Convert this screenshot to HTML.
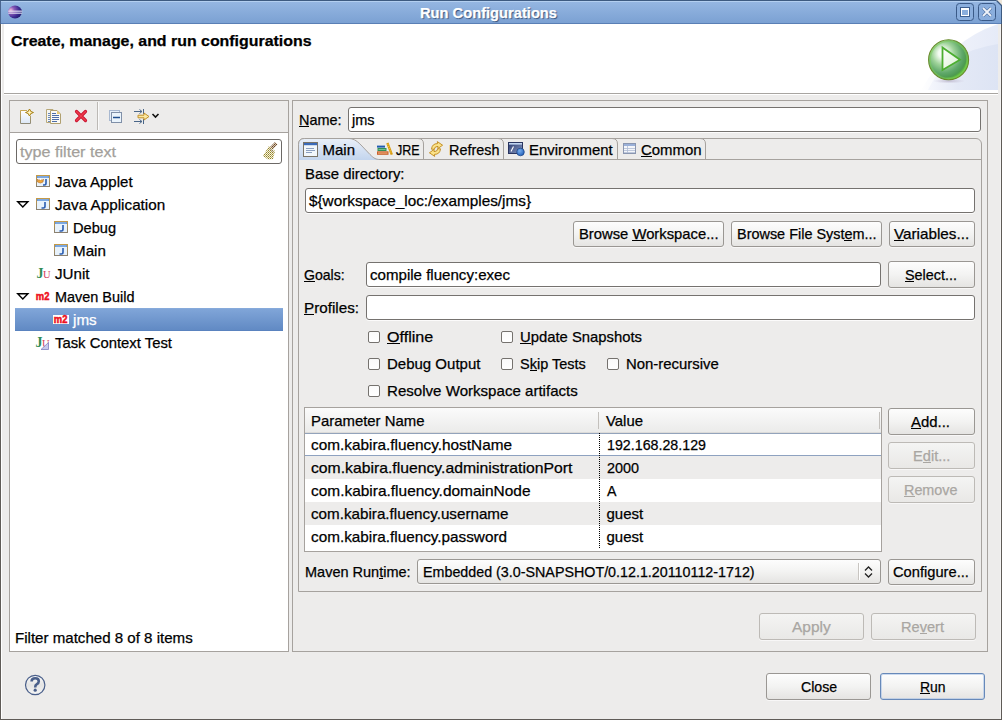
<!DOCTYPE html>
<html><head><meta charset="utf-8"><style>
html,body{margin:0;padding:0;}
body{width:1002px;height:720px;overflow:hidden;background:#edeceb;font-family:"Liberation Sans",sans-serif;}
#win{position:relative;width:1002px;height:720px;overflow:hidden;background:#edeceb;}
.a{position:absolute;box-sizing:border-box;}
.t{position:absolute;white-space:pre;font-family:"Liberation Sans",sans-serif;-webkit-text-stroke:0.25px currentColor;}
.tb{position:absolute;box-sizing:border-box;background:#fff;border:1px solid #75726f;border-radius:3px;box-shadow:0 1px 0 rgba(255,255,255,.8);}
.btn{position:absolute;box-sizing:border-box;border:1px solid #9a9793;border-radius:3px;background:linear-gradient(#fdfdfd,#f3f3f2 50%,#e5e4e2);box-shadow:0 1px 0 rgba(255,255,255,.6);}
.btn.dis{border-color:#bdbab6;background:linear-gradient(#f4f4f3,#e9e8e6);}
.btn.def{border-color:#6789b9;box-shadow:inset 0 0 0 1px rgba(170,195,230,.6);}
.cb{position:absolute;box-sizing:border-box;width:12px;height:12px;border:1px solid #75726e;border-radius:2px;background:linear-gradient(#fafafa,#fff);}
.frame{position:absolute;box-sizing:border-box;border:1px solid #a6a29e;}
svg{position:absolute;overflow:visible;}

</style></head><body>
<div id="win">
<div class="a" style="left:0;top:0;width:1002px;height:24px;background:linear-gradient(#97b8e3,#7aa0d2);"></div>
<div class="a" style="left:0;top:0;width:1002px;height:1px;background:#3d5a80"></div>
<div class="a" style="left:0;top:1px;width:1002px;height:1px;background:#b3cff0"></div>
<div class="a" style="left:0;top:23px;width:1002px;height:1px;background:#5a7fb5"></div>
<div class="a" style="left:1px;top:24px;width:1000px;height:70px;background:#fff"></div>
<svg style="left:0;top:0" width="1002" height="100" viewBox="0 0 1002 100">
<defs><linearGradient id="dg" x1="920" y1="0" x2="998" y2="0" gradientUnits="userSpaceOnUse"><stop offset="0" stop-color="#ffffff"/><stop offset=".5" stop-color="#eef1fa"/><stop offset="1" stop-color="#e6ebf8"/></linearGradient>
<linearGradient id="dg2" x1="930" y1="0" x2="998" y2="0" gradientUnits="userSpaceOnUse"><stop offset="0" stop-color="#f4f6fc"/><stop offset=".4" stop-color="#e4e9f6"/><stop offset="1" stop-color="#dde4f4"/></linearGradient></defs>
<path d="M921 90 Q950 40 998 24 V90 Z" fill="url(#dg)"/>
<path d="M928 90 Q945 52 998 44 V90 Z" fill="url(#dg2)"/>
</svg>
<div class="a" style="left:4px;top:93px;width:994px;height:1px;background:#a8a5a1"></div>
<div class="a" style="left:4px;top:94px;width:994px;height:1px;background:#fff"></div>
<div class="a" style="left:2px;top:24px;width:2px;height:70px;background:#edeceb"></div>
<div class="a" style="left:998px;top:24px;width:2px;height:70px;background:#edeceb"></div>
<div class="a" style="left:0;top:24px;width:1px;height:696px;background:#5f5b57"></div>
<div class="a" style="left:1px;top:24px;width:1px;height:695px;background:#fff"></div>
<div class="a" style="left:1001px;top:24px;width:1px;height:696px;background:#5f5b57"></div>
<div class="a" style="left:1000px;top:24px;width:1px;height:695px;background:#f4f3f2"></div>
<div class="a" style="left:0;top:719px;width:1002px;height:1px;background:#5f5b57"></div>
<svg style="left:995px;top:0" width="7" height="7" viewBox="0 0 7 7"><path d="M1 0 H7 V6 Z" fill="#ede6da"/><path d="M1.5 0.5 L6.5 5.5" stroke="#3d5a80" stroke-width="1.2"/></svg>
<div class="a" style="left:1001px;top:5px;width:1px;height:19px;background:#3d5a80"></div>
<div class="a" style="left:0;top:1px;width:1px;height:23px;background:#4a6590"></div>
<div class="t" style="left:420px;top:4.30px;font-size:15px;line-height:17px;font-weight:bold;color:#fff;text-shadow:1px 1px 1px #34507a;transform:scaleX(0.9787);transform-origin:0 0;">Run Configurations</div>
<svg style="left:7px;top:5px" width="16" height="14" viewBox="0 0 16 14">
<defs><radialGradient id="eg" cx="20%" cy="35%" r="85%"><stop offset="0" stop-color="#f0b8d8"/><stop offset=".3" stop-color="#8a5ab8"/><stop offset=".7" stop-color="#3a2a90"/><stop offset="1" stop-color="#20186a"/></radialGradient></defs>
<ellipse cx="8" cy="7" rx="7" ry="6.4" fill="url(#eg)"/>
<rect x="1.2" y="5.6" width="14" height="1.1" fill="#e6e8f6"/><rect x="1.2" y="7.6" width="14" height="1.1" fill="#e6e8f6"/></svg>
<svg style="left:956px;top:3px" width="40" height="18" viewBox="0 0 40 18">
<rect x="0.5" y="0.5" width="17" height="17" rx="3" fill="#8aaedd" stroke="#3a5a88"/>
<rect x="4.5" y="4.5" width="9" height="9" fill="none" stroke="#3d5f90" stroke-width="1"/>
<rect x="5.5" y="5.5" width="7" height="7" fill="none" stroke="#fff" stroke-width="1"/>
<rect x="6" y="5" width="6" height="2" fill="#fff"/>
<rect x="22.5" y="0.5" width="17" height="17" rx="3" fill="#8aaedd" stroke="#3a5a88"/>
<path d="M27 5 L35 13 M35 5 L27 13" stroke="#3d5f90" stroke-width="3"/>
<path d="M27 5 L35 13 M35 5 L27 13" stroke="#eef3fa" stroke-width="2"/>
</svg>
<div class="t" style="left:11px;top:32.30px;font-size:15px;line-height:17px;font-weight:bold;color:#000;transform:scaleX(1.0604);transform-origin:0 0;">Create, manage, and run configurations</div>
<svg style="left:926px;top:37px" width="46" height="48" viewBox="0 0 46 48">
<defs>
<radialGradient id="rg" cx="38%" cy="38%" r="62%" fx="35%" fy="33%"><stop offset="0" stop-color="#ffffff"/><stop offset=".18" stop-color="#f2faf0"/><stop offset=".45" stop-color="#9fd39a"/><stop offset=".75" stop-color="#5fa86a"/><stop offset=".92" stop-color="#4d9a50"/><stop offset="1" stop-color="#62c03a"/></radialGradient>
<radialGradient id="sh" cx="50%" cy="50%" r="50%"><stop offset="0" stop-color="#b0a8c0" stop-opacity=".7"/><stop offset="1" stop-color="#c0b8d0" stop-opacity="0"/></radialGradient>
</defs>
<ellipse cx="23" cy="44" rx="16" ry="2.5" fill="url(#sh)"/>
<circle cx="22.6" cy="22.8" r="20" fill="url(#rg)" stroke="#6a8a2a" stroke-width="1.1"/>
<circle cx="22.6" cy="22.8" r="18.6" fill="none" stroke="#7ccc5a" stroke-width="1.6" opacity=".55"/>
<defs><linearGradient id="trg" x1="0" y1="0" x2="1" y2="1"><stop offset="0" stop-color="#ffffff"/><stop offset="1" stop-color="#d8f0d0"/></linearGradient></defs><path d="M16.5 10.5 L34 22.7 L16.5 33 Z" fill="url(#trg)" stroke="#4cae30" stroke-width="1.8" stroke-linejoin="miter"/>
</svg>
<div class="frame" style="left:9px;top:100px;width:280px;height:552px;background:#fff"></div>
<div class="a" style="left:10px;top:101px;width:278px;height:31px;background:#edeceb"></div>
<div class="a" style="left:10px;top:132px;width:278px;height:1px;background:#a6a29e"></div>
<div class="a" style="left:97px;top:102px;width:1px;height:28px;background:#bcb9b5"></div>
<div class="a" style="left:98px;top:102px;width:1px;height:28px;background:#fafafa"></div>
<svg style="left:16px;top:104px" width="50" height="24" viewBox="0 0 50 24">
<defs><linearGradient id="pg" x1="0" y1="0" x2="0" y2="1"><stop offset="0" stop-color="#ffffff"/><stop offset="1" stop-color="#dde8f6"/></linearGradient>
<linearGradient id="pb" x1="0" y1="0" x2="0" y2="1"><stop offset="0" stop-color="#c8a855"/><stop offset="1" stop-color="#8e8a78"/></linearGradient></defs>
<path d="M4.5 6.5 H11 M4.5 6.5 V19.5 H14.5 V12" fill="none" stroke="url(#pb)"/>
<rect x="5" y="7" width="9" height="12" fill="url(#pg)"/>
<path d="M13.5 5 L15 7.5 L17.5 8.5 L15 9.5 L13.5 12 L12 9.5 L9.5 8.5 L12 7.5 Z" fill="#f0d070" stroke="#a07a10" stroke-width=".9"/>
<path d="M13.5 6.5 V10.5 M11.5 8.5 H15.5" stroke="#fff8d0" stroke-width=".8"/>
<path d="M30.5 5.5 H37 V18.5 H30.5 Z" fill="#f6f6f2" stroke="#b8a878"/>
<path d="M32 9.5h3M32 11.5h3M32 13.5h3M32 15.5h3M32 17.5h3" stroke="#6a88b8"/>
<path d="M34.5 6.5 H41 L44.5 10 V19.5 H34.5 Z" fill="#fafaf6" stroke="#b0a070"/>
<path d="M41 6.5 V10 H44.5 Z" fill="#e8c870"/>
<path d="M36 9.5h4M36 11.5h7M36 13.5h7M36 15.5h7M36 17.5h5" stroke="#4e6ea8" stroke-width="1"/>
</svg>
<svg style="left:75px;top:110px" width="12" height="12" viewBox="0 0 12 12">
<path d="M1.5 1.5 L10.5 10.5 M10.5 1.5 L1.5 10.5" stroke="#c8102e" stroke-width="3.2" stroke-linecap="round"/>
<path d="M1.5 1.5 L10.5 10.5 M10.5 1.5 L1.5 10.5" stroke="#ee3b4b" stroke-width="1.6" stroke-linecap="round"/>
</svg>
<svg style="left:109px;top:110px" width="14" height="14" viewBox="0 0 14 14">
<rect x="0.5" y="0.5" width="10" height="10" fill="#e6f0fa" stroke="#a8b8d0"/>
<rect x="2.5" y="2.5" width="10" height="10" fill="#eaf4fc" stroke="#8090a8"/>
<path d="M4 7.5h7" stroke="#1f4f8f" stroke-width="1.5"/>
</svg>
<svg style="left:134px;top:109px" width="26" height="16" viewBox="0 0 26 16">
<path d="M0 2.5h8M5.5 0.5l2.5 2-2.5 2M9.5 0v5" stroke="#4a6688" stroke-width="1" fill="none"/>
<path d="M0 12.5h8M5.5 10.5l2.5 2-2.5 2M9.5 10v5" stroke="#4a6688" stroke-width="1" fill="none"/>
<path d="M4 6.2h6V4l5 3.5-5 3.5V8.8H4z" fill="#fce8a0" stroke="#c0902a" stroke-width="1"/>
<path d="M18.5 5l3 3 3-3" stroke="#111" stroke-width="1.6" fill="none"/>
</svg>
<div class="tb" style="left:16px;top:139px;width:266px;height:25px;border-color:#6c6966;"></div>
<div class="t" style="left:20px;top:143.30px;font-size:15px;line-height:17px;font-weight:normal;color:#a39f9b;transform:scaleX(1.0762);transform-origin:0 0;">type filter text</div>
<svg style="left:250px;top:136px" width="40" height="32" viewBox="0 0 40 32">
<defs><pattern id="bp" x="0" y="0" width="2" height="2" patternUnits="userSpaceOnUse"><rect width="2" height="2" fill="#f4f2e4"/><rect width="1" height="1" fill="#958424"/><rect x="1" y="1" width="1" height="1" fill="#b8aa58"/></pattern>
<pattern id="hp" x="0" y="0" width="2" height="2" patternUnits="userSpaceOnUse"><rect width="2" height="2" fill="#d8c8b8"/><rect width="1" height="1" fill="#6a4a28"/><rect x="1" y="1" width="1" height="1" fill="#8a6a48"/></pattern></defs>
<path d="M25 6 L27.5 8.5 L22 14 L19.5 11.5 Z" fill="url(#hp)"/>
<path d="M19 10 L25 15 L23 23 L18 23.5 L13 20 Z" fill="url(#bp)"/>
<path d="M19.5 12.5 L23.5 16" stroke="#a898c8" stroke-width="1" opacity=".7"/>
</svg>
<svg style="left:36px;top:175px" width="14" height="12" viewBox="0 0 14 12">
<defs><linearGradient id="jb" x1="0" y1="0" x2="0" y2="1"><stop offset="0" stop-color="#c49a48"/><stop offset="1" stop-color="#8a8070"/></linearGradient></defs>
<rect x="0.5" y="0.5" width="13" height="11" fill="#e8f2fb" stroke="url(#jb)"/>
<rect x="1" y="1" width="12" height="2" fill="#5a8ed4"/>
<rect x="1.5" y="1.6" width="11" height=".8" fill="#b0d0f4"/>
<path d="M1.5 4 L3 5.5 L4.5 3.8 L6 5.5 L7.5 4 L7 7 L4.5 8 L1.5 7 Z" fill="#f0a838" stroke="#b86a20" stroke-width=".6"/>
<circle cx="4.5" cy="4" r=".9" fill="#fff"/>
<path d="M10 4 V8.3 Q10 10 8.3 10 H7" stroke="#2a5cb0" stroke-width="1.6" fill="none"/>
</svg>
<div class="t" style="left:55px;top:173.30px;font-size:15px;line-height:17px;font-weight:normal;color:#000;">Java Applet</div>
<svg style="left:17px;top:201px" width="12" height="8" viewBox="0 0 12 8"><path d="M0.7 0.7 H10.9 L5.8 6 Z" fill="none" stroke="#000" stroke-width="1.4" stroke-linejoin="miter"/></svg>
<svg style="left:36px;top:198px" width="14" height="12" viewBox="0 0 14 12">
<rect x="0.5" y="0.5" width="13" height="11" fill="#e8f2fb" stroke="url(#jb)"/>
<rect x="1" y="1" width="12" height="2" fill="#5a8ed4"/>
<rect x="1.5" y="1.6" width="11" height=".8" fill="#b0d0f4"/>
<path d="M9 4 V8.3 Q9 10 7.3 10 H5.5" stroke="#2a5cb0" stroke-width="1.6" fill="none"/>
</svg>
<div class="t" style="left:55px;top:196.30px;font-size:15px;line-height:17px;font-weight:normal;color:#000;transform:scaleX(1.0165);transform-origin:0 0;">Java Application</div>
<svg style="left:54px;top:221px" width="14" height="12" viewBox="0 0 14 12">
<rect x="0.5" y="0.5" width="13" height="11" fill="#e8f2fb" stroke="url(#jb)"/>
<rect x="1" y="1" width="12" height="2" fill="#5a8ed4"/>
<rect x="1.5" y="1.6" width="11" height=".8" fill="#b0d0f4"/>
<path d="M9 4 V8.3 Q9 10 7.3 10 H5.5" stroke="#2a5cb0" stroke-width="1.6" fill="none"/>
</svg>
<div class="t" style="left:73px;top:219.30px;font-size:15px;line-height:17px;font-weight:normal;color:#000;transform:scaleX(0.9750);transform-origin:0 0;">Debug</div>
<svg style="left:54px;top:244px" width="14" height="12" viewBox="0 0 14 12">
<rect x="0.5" y="0.5" width="13" height="11" fill="#e8f2fb" stroke="url(#jb)"/>
<rect x="1" y="1" width="12" height="2" fill="#5a8ed4"/>
<rect x="1.5" y="1.6" width="11" height=".8" fill="#b0d0f4"/>
<path d="M9 4 V8.3 Q9 10 7.3 10 H5.5" stroke="#2a5cb0" stroke-width="1.6" fill="none"/>
</svg>
<div class="t" style="left:73px;top:242.30px;font-size:15px;line-height:17px;font-weight:normal;color:#000;transform:scaleX(1.0118);transform-origin:0 0;">Main</div>
<svg style="left:36px;top:267px" width="16" height="15" viewBox="0 0 16 15"><text x="0.5" y="11" font-family="Liberation Serif" font-weight="bold" font-size="14" fill="#2e8a52">J</text><text x="7" y="11" font-family="Liberation Serif" font-size="10.5" fill="#d23c5a">U</text></svg>
<div class="t" style="left:55px;top:265.30px;font-size:15px;line-height:17px;font-weight:normal;color:#000;transform:scaleX(1.0091);transform-origin:0 0;">JUnit</div>
<svg style="left:17px;top:293px" width="12" height="8" viewBox="0 0 12 8"><path d="M0.7 0.7 H10.9 L5.8 6 Z" fill="none" stroke="#000" stroke-width="1.4" stroke-linejoin="miter"/></svg>
<svg style="left:35px;top:291px" width="17" height="11" viewBox="0 0 17 11"><text x="0.8" y="8.8" font-family="Liberation Sans" font-weight="bold" font-size="10.5" fill="#ee1020" stroke="#ee1020" stroke-width="0.5" textLength="13.6" lengthAdjust="spacingAndGlyphs">m2</text></svg>
<div class="t" style="left:55px;top:288.30px;font-size:15px;line-height:17px;font-weight:normal;color:#000;transform:scaleX(0.9631);transform-origin:0 0;">Maven Build</div>
<div class="a" style="left:15px;top:308px;width:268px;height:23px;background:linear-gradient(#80a5d8,#618ac4);border-top:1px solid #86aadb;border-bottom:1px solid #5a83bf"></div>
<svg style="left:53px;top:314px" width="17" height="11" viewBox="0 0 17 11"><rect x="0" y="1" width="16" height="9" fill="#fff"/><text x="0.8" y="8.8" font-family="Liberation Sans" font-weight="bold" font-size="10.5" fill="#ee1020" stroke="#ee1020" stroke-width="0.5" textLength="13.6" lengthAdjust="spacingAndGlyphs">m2</text></svg>
<div class="t" style="left:73px;top:311.30px;font-size:15px;line-height:17px;font-weight:normal;color:#fff;transform:scaleX(1.0159);transform-origin:0 0;">jms</div>
<svg style="left:35px;top:336px" width="16" height="15" viewBox="0 0 16 15"><text x="0.5" y="11" font-family="Liberation Serif" font-weight="bold" font-size="14" fill="#2e8a52">J</text><text x="7" y="11" font-family="Liberation Serif" font-size="10.5" fill="#d23c5a">U</text><path d="M6 13.5 L13.5 6.5 V13.5 Z" fill="#c8c8ec" stroke="#8080c0" stroke-width=".8"/></svg>
<div class="t" style="left:55px;top:334.30px;font-size:15px;line-height:17px;font-weight:normal;color:#000;transform:scaleX(0.9905);transform-origin:0 0;">Task Context Test</div>
<div class="t" style="left:15px;top:629.30px;font-size:15px;line-height:17px;font-weight:normal;color:#000;transform:scaleX(1.0055);transform-origin:0 0;">Filter matched 8 of 8 items</div>
<div class="frame" style="left:292px;top:100px;width:696px;height:552px;"></div>
<div class="t" style="left:299px;top:110.80px;font-size:15px;line-height:17px;font-weight:normal;color:#000;transform:scaleX(0.9618);transform-origin:0 0;">Name:</div><div style="position:absolute;left:299.0px;top:126px;width:10.4px;height:1px;background:#000"></div>
<div class="tb" style="left:348px;top:107px;width:633px;height:25px;"></div>
<div class="t" style="left:352px;top:110.80px;font-size:15px;line-height:17px;font-weight:normal;color:#000;transform:scaleX(0.9688);transform-origin:0 0;">jms</div>
<div class="a" style="left:298px;top:138px;width:684px;height:454px;border:1px solid #a6a29e;border-radius:6px 6px 0 0;"></div>
<div class="a" style="left:384px;top:159px;width:597px;height:1px;background:#a6a29e"></div>
<svg style="left:298px;top:138px" width="130" height="22" viewBox="0 0 130 22">
<defs><linearGradient id="tg" x1="0" y1="0" x2="0" y2="1"><stop offset="0" stop-color="#e9eff8"/><stop offset="1" stop-color="#c3d5ee"/></linearGradient></defs>
<path d="M0.5 21.5 V6.5 Q0.5 0.5 6.5 0.5 H50 C55 0.5 58 2 63 7 L72 16.5 C76 20.5 78 21 82 21 H86 V22 H0.5 Z" fill="url(#tg)"/><path d="M0.5 22 V6.5 Q0.5 0.5 6.5 0.5 H50 C55 0.5 58 2 63 7 L72 16.5 C76 20.5 78 21.5 82 21.5 H86" fill="none" stroke="#a6a29e"/>
</svg>
<div class="a" style="left:348px;top:138px;width:357px;height:1px;background:#a6a29e"></div>
<svg style="left:415px;top:138px" width="10" height="22" viewBox="0 0 10 22"><path d="M0 0.5 H3 Q8.5 0.5 8.5 6 V21" fill="none" stroke="#a6a29e"/></svg>
<svg style="left:495px;top:138px" width="10" height="22" viewBox="0 0 10 22"><path d="M0 0.5 H3 Q8.5 0.5 8.5 6 V21" fill="none" stroke="#a6a29e"/></svg>
<svg style="left:609px;top:138px" width="10" height="22" viewBox="0 0 10 22"><path d="M0 0.5 H3 Q8.5 0.5 8.5 6 V21" fill="none" stroke="#a6a29e"/></svg>
<svg style="left:697px;top:138px" width="10" height="22" viewBox="0 0 10 22"><path d="M0 0.5 H3 Q8.5 0.5 8.5 6 V21" fill="none" stroke="#a6a29e"/></svg>
<svg style="left:303px;top:142px" width="16" height="16" viewBox="0 0 16 16">
<rect x="0.5" y="0.5" width="14" height="14" fill="#f2f7fb" stroke="#7a7468"/>
<rect x="1" y="1" width="13" height="2.2" fill="#3a6ab8"/>
<path d="M3 6.5h8M3 8.5h9M3 10.5h6" stroke="#8ca0c0"/>
</svg>
<div class="t" style="left:322.5px;top:141.30px;font-size:15px;line-height:17px;font-weight:normal;color:#000;">Main</div>
<svg style="left:377px;top:142px" width="16" height="14" viewBox="0 0 16 14">
<rect x="0" y="3.6" width="8" height="2" fill="#1e5cb0"/>
<rect x="0.5" y="6" width="9" height="3" fill="#2f8f56"/><rect x="1.5" y="7.1" width="7" height=".8" fill="#8ad0a0"/>
<rect x="0" y="9.3" width="11.5" height="3.5" fill="#c8602a"/><rect x="1" y="10.5" width="9.5" height="1.1" fill="#f0b080"/>
<path d="M10.4 1 L14.8 12.7" stroke="#d89a10" stroke-width="2.4"/>
<path d="M10.8 2.2 L14.3 11.5" stroke="#f8d850" stroke-width=".9" stroke-dasharray="1 1"/>
</svg>
<div class="t" style="left:396.4px;top:141.30px;font-size:15px;line-height:17px;font-weight:normal;color:#000;transform:scaleX(0.8326);transform-origin:0 0;">JRE</div>
<svg style="left:428px;top:141px" width="16" height="16" viewBox="0 0 16 16">
<g fill="#fbe38a" stroke="#c08818" stroke-width=".9" stroke-linejoin="round">
<path d="M3.5 8.2 Q4 2.6 9.6 2.6 L9.3 0.6 L14.6 4.2 L9.8 7.6 L10 5.4 Q6.6 5.2 6.3 8.2 Z"/>
<path transform="rotate(180 8 8)" d="M3.5 8.2 Q4 2.6 9.6 2.6 L9.3 0.6 L14.6 4.2 L9.8 7.6 L10 5.4 Q6.6 5.2 6.3 8.2 Z"/>
</g>
</svg>
<div class="t" style="left:448.6px;top:141.30px;font-size:15px;line-height:17px;font-weight:normal;color:#000;transform:scaleX(0.9594);transform-origin:0 0;">Refresh</div>
<svg style="left:508px;top:142px" width="17" height="14" viewBox="0 0 17 14">
<defs><linearGradient id="eg2" x1="0" y1="0" x2="1" y2="1"><stop offset="0" stop-color="#2a3a70"/><stop offset="1" stop-color="#8a9ac0"/></linearGradient>
<radialGradient id="eb" cx="40%" cy="35%" r="70%"><stop offset="0" stop-color="#7ab0ee"/><stop offset="1" stop-color="#1f5cb8"/></radialGradient></defs>
<rect x="0.5" y="0.5" width="14" height="11" fill="url(#eg2)" stroke="#2a3560"/>
<rect x="1" y="1" width="13" height="1.6" fill="#c0d4f0"/>
<path d="M3 9.5 L5.5 4.5" stroke="#fff" stroke-width="1.1"/>
<circle cx="12.5" cy="10" r="3.8" fill="url(#eb)" stroke="#1a4080" stroke-width=".7"/>
</svg>
<div class="t" style="left:528.6px;top:141.30px;font-size:15px;line-height:17px;font-weight:normal;color:#000;transform:scaleX(0.9927);transform-origin:0 0;">Environment</div>
<svg style="left:623px;top:143px" width="14" height="12" viewBox="0 0 14 12">
<rect x="0.5" y="0.5" width="12" height="10" fill="#f4f6fa" stroke="#8a96b0"/>
<rect x="1" y="1" width="11" height="2" fill="#9ab0d8"/>
<path d="M1 5.5h11M1 7.5h11M1 9.5h11M4.5 3v7" stroke="#b0bcd4" stroke-width=".8"/>
</svg>
<div class="t" style="left:641px;top:141.30px;font-size:15px;line-height:17px;font-weight:normal;color:#000;transform:scaleX(0.9957);transform-origin:0 0;">Common</div><div style="position:absolute;left:641.0px;top:156px;width:10.8px;height:1px;background:#000"></div>
<div class="t" style="left:304.5px;top:164.80px;font-size:15px;line-height:17px;font-weight:normal;color:#000;transform:scaleX(0.9945);transform-origin:0 0;">Base directory:</div>
<div class="tb" style="left:305px;top:188px;width:670px;height:25px;"></div>
<div class="t" style="left:309.4px;top:191.80px;font-size:15px;line-height:17px;font-weight:normal;color:#000;transform:scaleX(1.0202);transform-origin:0 0;">${workspace_loc:/examples/jms}</div>
<div class="btn " style="left:573px;top:221px;width:151px;height:26px"></div>
<div class="t" style="left:578.5px;top:225.30px;font-size:15px;line-height:17px;font-weight:normal;color:#000;transform:scaleX(0.9862);transform-origin:0 0;">Browse Workspace...</div><div style="position:absolute;left:631.9px;top:240px;width:14.0px;height:1px;background:#000"></div>
<div class="btn " style="left:731px;top:221px;width:151px;height:26px"></div>
<div class="t" style="left:736.7px;top:225.30px;font-size:15px;line-height:17px;font-weight:normal;color:#000;transform:scaleX(0.9624);transform-origin:0 0;">Browse File System...</div><div style="position:absolute;left:844.2px;top:240px;width:8.0px;height:1px;background:#000"></div>
<div class="btn " style="left:889px;top:221px;width:86px;height:26px"></div>
<div class="t" style="left:894.2px;top:225.30px;font-size:15px;line-height:17px;font-weight:normal;color:#000;transform:scaleX(1.0171);transform-origin:0 0;">Variables...</div><div style="position:absolute;left:894.2px;top:240px;width:10.2px;height:1px;background:#000"></div>
<div class="t" style="left:304.3px;top:266.30px;font-size:15px;line-height:17px;font-weight:normal;color:#000;transform:scaleX(0.9387);transform-origin:0 0;">Goals:</div><div style="position:absolute;left:304.3px;top:281px;width:11.0px;height:1px;background:#000"></div>
<div class="tb" style="left:366px;top:262px;width:515px;height:25px;"></div>
<div class="t" style="left:370px;top:266.30px;font-size:15px;line-height:17px;font-weight:normal;color:#000;transform:scaleX(1.0055);transform-origin:0 0;">compile fluency:exec</div>
<div class="btn " style="left:888px;top:261px;width:87px;height:27px"></div>
<div class="t" style="left:904.8px;top:266.30px;font-size:15px;line-height:17px;font-weight:normal;color:#000;transform:scaleX(0.9594);transform-origin:0 0;">Select...</div><div style="position:absolute;left:904.8px;top:281px;width:9.6px;height:1px;background:#000"></div>
<div class="t" style="left:304.3px;top:299.30px;font-size:15px;line-height:17px;font-weight:normal;color:#000;transform:scaleX(1.0150);transform-origin:0 0;">Profiles:</div><div style="position:absolute;left:304.3px;top:314px;width:10.2px;height:1px;background:#000"></div>
<div class="tb" style="left:366px;top:295px;width:609px;height:25px;"></div>
<div class="cb" style="left:368px;top:331px"></div>
<div class="t" style="left:387px;top:328.30px;font-size:15px;line-height:17px;font-weight:normal;color:#000;transform:scaleX(1.0744);transform-origin:0 0;">Offline</div><div style="position:absolute;left:387.0px;top:343px;width:12.5px;height:1px;background:#000"></div>
<div class="cb" style="left:501px;top:331px"></div>
<div class="t" style="left:520px;top:328.30px;font-size:15px;line-height:17px;font-weight:normal;color:#000;transform:scaleX(0.9885);transform-origin:0 0;">Update Snapshots</div><div style="position:absolute;left:520.0px;top:343px;width:10.7px;height:1px;background:#000"></div>
<div class="cb" style="left:368px;top:358px"></div>
<div class="t" style="left:387px;top:355.30px;font-size:15px;line-height:17px;font-weight:normal;color:#000;">Debug Output</div>
<div class="cb" style="left:501px;top:358px"></div>
<div class="t" style="left:520px;top:355.30px;font-size:15px;line-height:17px;font-weight:normal;color:#000;transform:scaleX(0.9663);transform-origin:0 0;">Skip Tests</div><div style="position:absolute;left:529.7px;top:370px;width:7.2px;height:1px;background:#000"></div>
<div class="cb" style="left:607px;top:358px"></div>
<div class="t" style="left:626px;top:355.30px;font-size:15px;line-height:17px;font-weight:normal;color:#000;transform:scaleX(0.9928);transform-origin:0 0;">Non-recursive</div>
<div class="cb" style="left:368px;top:385px"></div>
<div class="t" style="left:387px;top:382.30px;font-size:15px;line-height:17px;font-weight:normal;color:#000;transform:scaleX(1.0053);transform-origin:0 0;">Resolve Workspace artifacts</div>
<div class="a" style="left:304px;top:407px;width:578px;height:145px;border:1px solid #a6a29e;background:#fff"></div>
<div class="a" style="left:305px;top:408px;width:576px;height:24px;background:linear-gradient(#fbfbfb,#ebebea)"></div>
<div class="a" style="left:305px;top:432px;width:576px;height:1px;background:#dcdbd9"></div>
<div class="a" style="left:305px;top:433px;width:576px;height:1px;background:#93a3bb"></div>
<div class="a" style="left:598px;top:412px;width:1px;height:17px;background:#c3c0bc"></div>
<div class="a" style="left:879px;top:412px;width:1px;height:17px;background:#c3c0bc"></div>
<div class="t" style="left:310.5px;top:412.30px;font-size:15px;line-height:17px;font-weight:normal;color:#000;transform:scaleX(0.9937);transform-origin:0 0;">Parameter Name</div>
<div class="t" style="left:605.5px;top:412.30px;font-size:15px;line-height:17px;font-weight:normal;color:#000;transform:scaleX(0.9929);transform-origin:0 0;">Value</div>
<div class="a" style="left:305px;top:456px;width:576px;height:23px;background:#edeceb"></div>
<div class="a" style="left:305px;top:502px;width:576px;height:23px;background:#edeceb"></div>
<div class="a" style="left:305px;top:455px;width:576px;height:1px;background:#8ea2c0"></div>
<div class="a" style="left:599px;top:433px;width:1px;height:115px;background:repeating-linear-gradient(#000 0 1px,transparent 1px 2px)"></div>
<div class="t" style="left:311px;top:436.30px;font-size:15px;line-height:17px;font-weight:normal;color:#000;transform:scaleX(1.0230);transform-origin:0 0;">com.kabira.fluency.hostName</div>
<div class="t" style="left:606.5px;top:436.30px;font-size:15px;line-height:17px;font-weight:normal;color:#000;transform:scaleX(0.9494);transform-origin:0 0;">192.168.28.129</div>
<div class="t" style="left:311px;top:459.30px;font-size:15px;line-height:17px;font-weight:normal;color:#000;transform:scaleX(1.0494);transform-origin:0 0;">com.kabira.fluency.administrationPort</div>
<div class="t" style="left:606.5px;top:459.30px;font-size:15px;line-height:17px;font-weight:normal;color:#000;transform:scaleX(0.9588);transform-origin:0 0;">2000</div>
<div class="t" style="left:311px;top:482.30px;font-size:15px;line-height:17px;font-weight:normal;color:#000;transform:scaleX(1.0297);transform-origin:0 0;">com.kabira.fluency.domainNode</div>
<div class="t" style="left:606.5px;top:482.30px;font-size:15px;line-height:17px;font-weight:normal;color:#000;transform:scaleX(0.9485);transform-origin:0 0;">A</div>
<div class="t" style="left:311px;top:505.30px;font-size:15px;line-height:17px;font-weight:normal;color:#000;transform:scaleX(1.0138);transform-origin:0 0;">com.kabira.fluency.username</div>
<div class="t" style="left:606.5px;top:505.30px;font-size:15px;line-height:17px;font-weight:normal;color:#000;">guest</div>
<div class="t" style="left:311px;top:528.30px;font-size:15px;line-height:17px;font-weight:normal;color:#000;transform:scaleX(1.0192);transform-origin:0 0;">com.kabira.fluency.password</div>
<div class="t" style="left:606.5px;top:528.30px;font-size:15px;line-height:17px;font-weight:normal;color:#000;">guest</div>
<div class="btn " style="left:888px;top:408px;width:87px;height:27px"></div>
<div class="t" style="left:911.2px;top:413.30px;font-size:15px;line-height:17px;font-weight:normal;color:#000;transform:scaleX(0.9948);transform-origin:0 0;">Add...</div><div style="position:absolute;left:911.2px;top:428px;width:10.0px;height:1px;background:#000"></div>
<div class="btn dis" style="left:888px;top:442px;width:87px;height:27px"></div>
<div class="t" style="left:912.7px;top:447.30px;font-size:15px;line-height:17px;font-weight:normal;color:#a9a6a2;transform:scaleX(0.9750);transform-origin:0 0;">Edit...</div><div style="position:absolute;left:922.5px;top:462px;width:8.1px;height:1px;background:#a9a6a2"></div>
<div class="btn dis" style="left:888px;top:476px;width:87px;height:27px"></div>
<div class="t" style="left:904.3px;top:481.30px;font-size:15px;line-height:17px;font-weight:normal;color:#a9a6a2;transform:scaleX(0.9578);transform-origin:0 0;">Remove</div><div style="position:absolute;left:904.3px;top:496px;width:10.4px;height:1px;background:#a9a6a2"></div>
<div class="t" style="left:304.7px;top:563.30px;font-size:15px;line-height:17px;font-weight:normal;color:#000;transform:scaleX(0.9669);transform-origin:0 0;">Maven Runtime:</div><div style="position:absolute;left:378.9px;top:578px;width:4.0px;height:1px;background:#000"></div>
<div class="btn" style="left:417px;top:559px;width:464px;height:25px"></div>
<div class="t" style="left:423.4px;top:563.30px;font-size:15px;line-height:17px;font-weight:normal;color:#000;transform:scaleX(0.9529);transform-origin:0 0;">Embedded (3.0-SNAPSHOT/0.12.1.20110112-1712)</div>
<div class="a" style="left:858px;top:563px;width:1px;height:17px;background:#c8c5c1"></div>
<div class="a" style="left:859px;top:563px;width:1px;height:17px;background:#fff"></div>
<svg style="left:864px;top:566px" width="9" height="12" viewBox="0 0 9 12"><path d="M1 4.5 L4.5 1 L8 4.5 M1 7.5 L4.5 11 L8 7.5" fill="none" stroke="#222" stroke-width="1.3"/></svg>
<div class="btn " style="left:888px;top:559px;width:87px;height:26px"></div>
<div class="t" style="left:893.4px;top:563.30px;font-size:15px;line-height:17px;font-weight:normal;color:#000;transform:scaleX(0.9788);transform-origin:0 0;">Configure...</div>
<div class="btn dis" style="left:759px;top:613px;width:105px;height:27px"></div>
<div class="t" style="left:792.3px;top:618.30px;font-size:15px;line-height:17px;font-weight:normal;color:#a9a6a2;transform:scaleX(1.0311);transform-origin:0 0;">Apply</div>
<div class="btn dis" style="left:871px;top:613px;width:105px;height:27px"></div>
<div class="t" style="left:901.4px;top:618.30px;font-size:15px;line-height:17px;font-weight:normal;color:#a9a6a2;transform:scaleX(0.9731);transform-origin:0 0;">Revert</div><div style="position:absolute;left:920.1px;top:633px;width:7.3px;height:1px;background:#a9a6a2"></div>
<svg style="left:24px;top:674px" width="22" height="22" viewBox="0 0 22 22">
<defs><linearGradient id="hg" x1="0" y1="0" x2="0" y2="1"><stop offset="0" stop-color="#fbfbfb"/><stop offset=".5" stop-color="#e4e4e4"/><stop offset="1" stop-color="#f6f6f6"/></linearGradient></defs>
<circle cx="11.2" cy="11" r="9.7" fill="url(#hg)" stroke="#4a5f8a" stroke-width="1.2"/>
<path d="M7.6 7.4 Q7.6 4.2 11.2 4.2 Q14.8 4.2 14.8 7.2 Q14.8 9.2 12.6 10.3 Q11.2 11 11.2 13.4" fill="none" stroke="#4a5f8a" stroke-width="2.6" stroke-linecap="butt"/>
<circle cx="11.2" cy="16.2" r="1.6" fill="#4a5f8a"/>
</svg>
<div class="btn " style="left:766px;top:673px;width:105px;height:27px"></div>
<div class="t" style="left:800.6px;top:678.30px;font-size:15px;line-height:17px;font-weight:normal;color:#000;transform:scaleX(0.9437);transform-origin:0 0;">Close</div>
<div class="btn def" style="left:880px;top:673px;width:105px;height:27px"></div>
<div class="t" style="left:919.9px;top:678.30px;font-size:15px;line-height:17px;font-weight:normal;color:#000;transform:scaleX(0.9299);transform-origin:0 0;">Run</div><div style="position:absolute;left:919.9px;top:693px;width:10.1px;height:1px;background:#000"></div>
</div>
</body></html>
